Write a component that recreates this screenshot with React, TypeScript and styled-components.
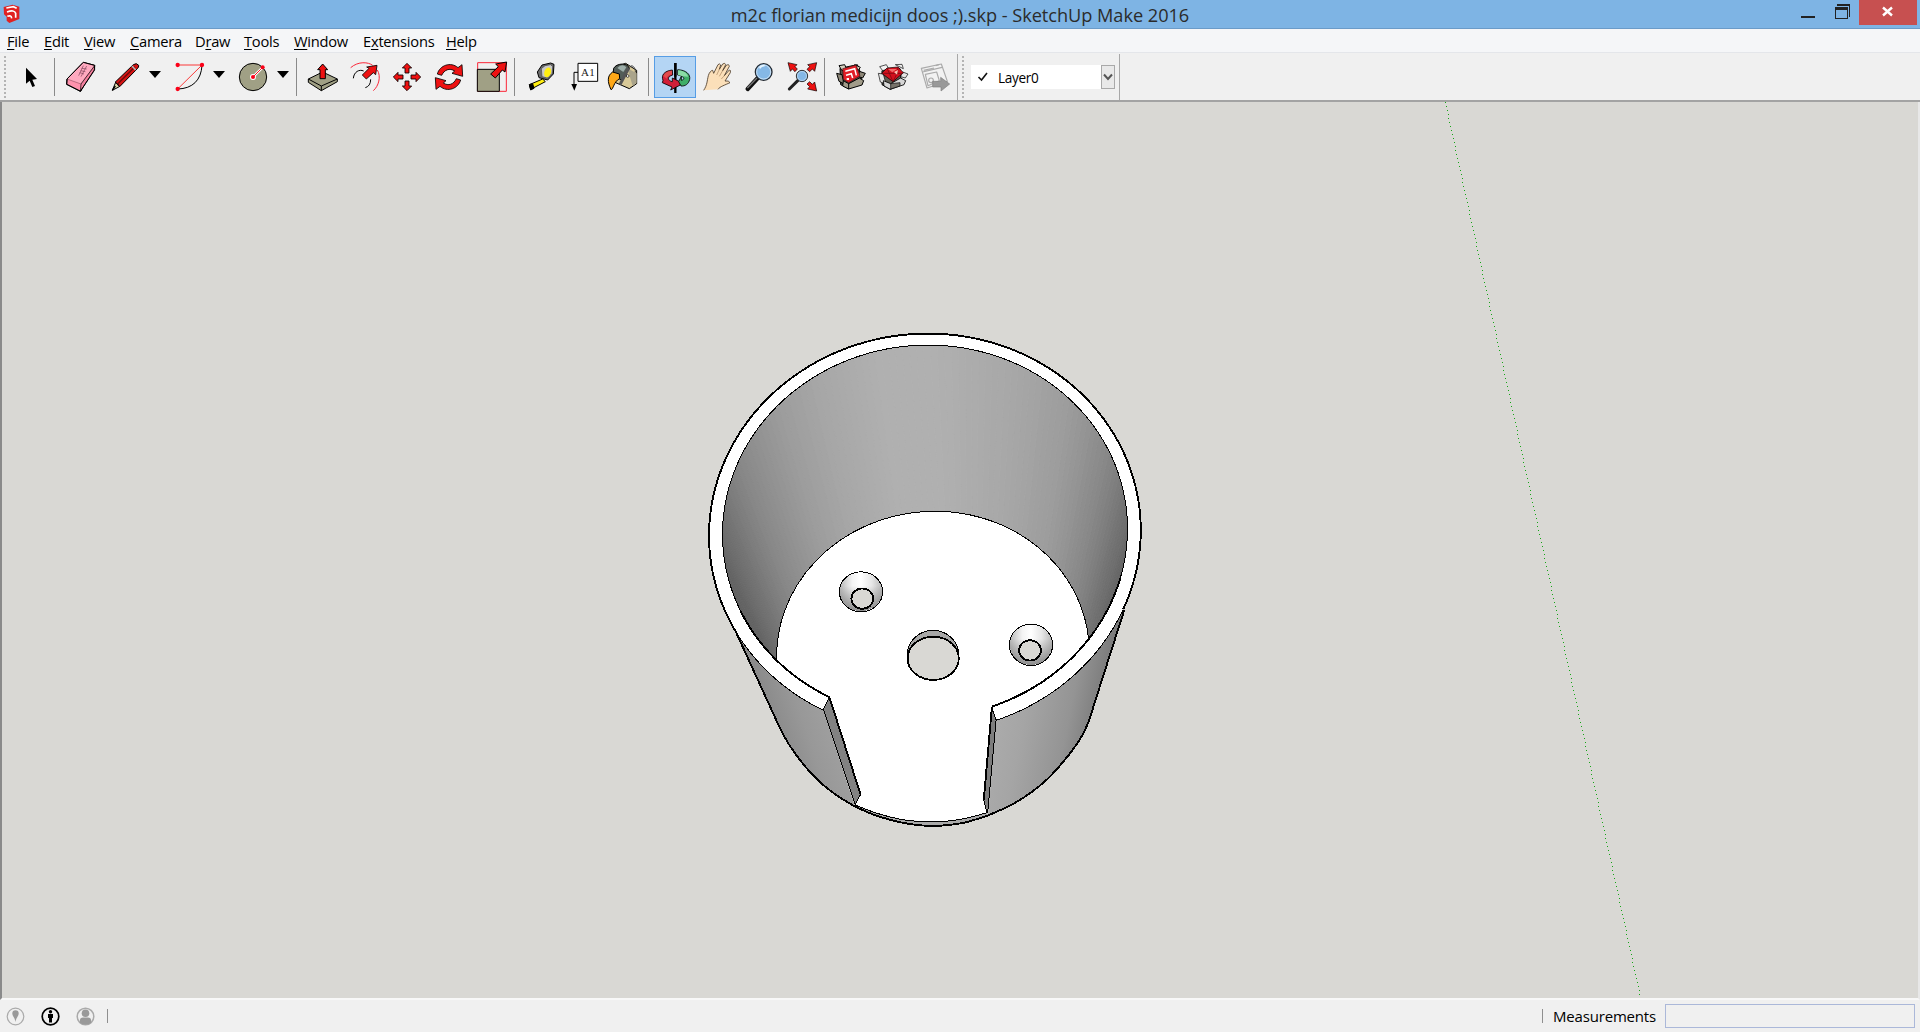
import React from "react";
import styled, { createGlobalStyle } from "styled-components";

const Global = createGlobalStyle`
  * { box-sizing: border-box; }
  html, body { margin: 0; padding: 0; overflow: hidden; }
  body { font-family: "Open Sans", "Noto Sans", sans-serif; color: #000; }
`;

const AppWindow = styled.div`
  width: 1920px;
  height: 1032px;
  display: flex;
  flex-direction: column;
  background: #f0f0f0;
`;

const TitleBar = styled.header`
  height: 29px;
  flex: none;
  display: grid;
  grid-template-columns: 160px 1fr 160px;
  background: #7eb4e4;
  border-bottom: 1px solid #6b9bc8;
`;

const AppIcon = styled.svg`
  width: 18px;
  height: 20px;
  margin: 4px 0 0 3px;
`;

const Title = styled.div`
  text-align: center;
  font-size: 18.2px;
  line-height: 30px;
  letter-spacing: -0.04px;
  color: #2b2b2b;
  white-space: pre;
`;

const WindowButtons = styled.div`
  display: flex;
  justify-content: flex-end;
  padding-right: 3px;
`;

const WindowButton = styled.button<{ $w: number; $close?: boolean }>`
  width: ${(p) => p.$w}px;
  height: 25px;
  border: 0;
  padding: 0;
  background: ${(p) => (p.$close ? "#c75050" : "transparent")};
  svg { display: block; }
`;

const MenuBar = styled.nav`
  height: 24px;
  flex: none;
  display: flex;
  padding-left: 7px;
  background: #f5f6f8;
  border-bottom: 1px solid #e4e6ea;
`;

const MenuItem = styled.div<{ $w: number }>`
  width: ${(p) => p.$w}px;
  flex: none;
  font-size: 14.7px;
  line-height: 25px;
  letter-spacing: -0.25px;
  white-space: nowrap;
  u { text-underline-offset: 2px; text-decoration-thickness: 1px; text-decoration-skip-ink: none; }
`;

const ToolArea = styled.div`
  height: 49px;
  flex: none;
  display: flex;
  background: #f0f0f0;
  border-bottom: 2px solid #a3a3a3;
  padding-top: 1px;
`;

const ToolBand = styled.div<{ $w: number }>`
  width: ${(p) => p.$w}px;
  height: 46px;
  flex: none;
  display: flex;
  align-items: center;
  border-right: 1px solid #a8a8a8;
`;

const Grip = styled.div<{ $l: number; $r: number }>`
  width: 2px;
  height: 42px;
  flex: none;
  margin: 0 ${(p) => p.$r}px 0 ${(p) => p.$l}px;
  background: repeating-linear-gradient(#b4b4b4 0 2px, transparent 2px 4px);
`;

const Separator = styled.div<{ $l?: number; $r?: number }>`
  width: 1px;
  height: 38px;
  flex: none;
  background: #8a8a8a;
  margin: 0 ${(p) => p.$r ?? 5}px 0 ${(p) => p.$l ?? 2}px;
`;

const ToolButton = styled.button<{ $active?: boolean; $gap?: number }>`
  width: 42px;
  height: 42px;
  flex: none;
  padding: 0;
  border: 0;
  margin-right: ${(p) => p.$gap ?? 0}px;
  background: ${(p) => (p.$active ? "#b4d5f4" : "transparent")};
  box-shadow: ${(p) => (p.$active ? "inset 0 0 0 1px #569de5" : "none")};
  svg { display: block; width: 42px; height: 42px; }
`;

const DropArrow = styled.button`
  width: 18px;
  height: 42px;
  flex: none;
  padding: 0 0 5px;
  border: 0;
  margin-right: 4px;
  background: transparent;
  display: flex;
  align-items: center;
  justify-content: center;
  &::before {
    content: "";
    border: 6px solid transparent;
    border-top: 7px solid #000;
    border-bottom: 0;
  }
`;

const LayerSelect = styled.div`
  width: 144px;
  height: 24px;
  display: flex;
  align-items: center;
  background: #fff;
  font-size: 13.6px;
  letter-spacing: -0.35px;
`;

const CheckMark = styled.svg`
  width: 12px;
  height: 10px;
  margin: 0 9px 0 6px;
`;

const SelectArrow = styled.div`
  width: 14px;
  height: 24px;
  margin-left: auto;
  border: 1px solid #a9a9a9;
  background: #e9e9e9;
  svg { display: block; }
`;

const Viewport = styled.main`
  height: 898px;
  flex: none;
  border: solid;
  border-width: 0 2px 2px 2px;
  border-color: #696969 #e8e8e8 #f8f8f8 #8a8a8a;
  background: #d9d8d4;
  svg { display: block; }
`;

const StatusBar = styled.footer`
  flex: 1;
  display: flex;
  align-items: center;
  justify-content: space-between;
  padding: 0 5px 0 6px;
`;

const StatusGroup = styled.div`
  display: flex;
  align-items: center;
`;

const StatusIcon = styled.svg`
  width: 19px;
  height: 19px;
  margin: 1px 16px 0 0;
`;

const StatusDivider = styled.div<{ $l?: number; $r?: number }>`
  width: 1px;
  height: 14px;
  background: #8f8f8f;
  margin: 0 ${(p) => p.$r ?? 0}px 0 ${(p) => p.$l ?? 0}px;
`;

const MeasureLabel = styled.span`
  width: 112px;
  font-size: 15px;
  line-height: 20px;
  letter-spacing: -0.18px;
`;

const MeasureBox = styled.div`
  width: 250px;
  height: 24px;
  border: 1px solid #abb8d9;
`;

type Pt = [number, number];

/* Smooth curve through a list of points. */
function curve(pts: Pt[]): string {
  let d = "";
  for (let i = 0; i < pts.length - 1; i++) {
    const p0 = pts[Math.max(0, i - 1)];
    const p1 = pts[i];
    const p2 = pts[i + 1];
    const p3 = pts[Math.min(pts.length - 1, i + 2)];
    d += `C${p1[0] + (p2[0] - p0[0]) / 6} ${p1[1] + (p2[1] - p0[1]) / 6} ${p2[0] - (p3[0] - p1[0]) / 6} ${p2[1] - (p3[1] - p1[1]) / 6} ${p2[0]} ${p2[1]}`;
  }
  return d;
}

interface Ell { cx: number; cy: number; a: number; b: number; rot: number }
const OUTER: Ell = { cx: 924.9, cy: 533, a: 216, b: 199.3, rot: -5 };
const INNER: Ell = { cx: 925, cy: 531.5, a: 202.6, b: 186.3, rot: -5 };
const FLOOR: Ell = { cx: 933, cy: 654.3, a: 156.4, b: 143, rot: -4 };

function at(e: Ell, deg: number): Pt {
  const t = (deg * Math.PI) / 180;
  const r = (e.rot * Math.PI) / 180;
  const u = e.a * Math.cos(t);
  const v = -e.b * Math.sin(t);
  return [e.cx + u * Math.cos(r) - v * Math.sin(r), e.cy + u * Math.sin(r) + v * Math.cos(r)];
}

/* Points of an elliptical arc, joined by line commands. */
function arc(e: Ell, from: number, to: number): string {
  const n = Math.ceil(Math.abs(to - from) / 1.5);
  return Array.from({ length: n + 1 }, (_, i) => `L${at(e, from + ((to - from) * i) / n).join(" ")}`).join("");
}

/* Grey level of the inner wall by angle around the axis. */
const SHADES: Pt[] = [
  [-60, 95], [-22, 97], [-8, 105], [6, 118], [20, 136], [40, 157], [60, 168], [82, 176], [98, 176],
  [115, 168], [132, 155], [150, 137], [168, 115], [182, 101], [195, 97], [215, 104], [240, 110],
];
function shade(deg: number): string {
  let i = 0;
  while (i < SHADES.length - 2 && SHADES[i + 1][0] < deg) i++;
  const [a, x] = SHADES[i];
  const [b, y] = SHADES[i + 1];
  const g = Math.round(x + ((y - x) * (deg - a)) / (b - a));
  return `rgb(${g},${g},${g})`;
}

function Ellipse({ e, ...rest }: { e: Ell } & React.SVGProps<SVGEllipseElement>) {
  return <ellipse cx={e.cx} cy={e.cy} rx={e.a} ry={e.b} transform={`rotate(${e.rot} ${e.cx} ${e.cy})`} {...rest} />;
}

function Model() {
  const strips = [];
  for (let d = -46; d < 232; d += 2) {
    const p = [at(INNER, d), at(INNER, d + 2), at(FLOOR, d + 2), at(FLOOR, d)];
    strips.push(<polygon key={d} points={p.map((q) => q.join(",")).join(" ")} fill={shade(d)} stroke={shade(d)} strokeWidth="1" />);
  }
  const dots = Array.from({ length: 224 }, (_, i) => (
    <rect key={i} x={Math.round(1445 + i * 0.872)} y={102 + i * 4} width="1" height="1" />
  ));
  const left: Pt[] = [[780, 728.3], [789, 744.5], [800, 760], [811, 773], [823.3, 785], [838, 796.3], [855, 806.5]];
  const front: Pt[] = [[855, 806.5], [872, 814], [890, 819.8], [905, 823.2], [920, 825.3], [932, 825.8], [944, 825.4], [965, 822.5], [988, 815.5]];
  const right: Pt[] = [[988, 815.5], [1010, 805.5], [1030, 793.3], [1048, 778.5], [1063.3, 761.7], [1074, 748], [1083.3, 733.3], [1090, 718], [1093.6, 706]];
  const floorFront: Pt[] = [[855, 805], [878, 813.6], [902, 819.6], [923, 821.6], [944, 821.4], [965, 818.5], [987, 812.7]];
  return (
    <svg width="1916" height="896" viewBox="2 102 1916 896">
      <defs>
        <linearGradient id="wallL" gradientUnits="userSpaceOnUse" x1="752" y1="690" x2="855" y2="655">
          <stop offset="0" stopColor="#868686" /><stop offset=".35" stopColor="#989898" /><stop offset="1" stopColor="#ababab" />
        </linearGradient>
        <linearGradient id="wallR" gradientUnits="userSpaceOnUse" x1="990" y1="700" x2="1112" y2="724">
          <stop offset="0" stopColor="#adadad" /><stop offset=".3" stopColor="#a5a5a5" /><stop offset=".65" stopColor="#949494" /><stop offset="1" stopColor="#6f6f6f" />
        </linearGradient>
        <linearGradient id="sinkX">
          <stop offset="0" stopColor="#b5b5b5" /><stop offset=".3" stopColor="#f3f3f3" /><stop offset=".5" stopColor="#fff" /><stop offset=".75" stopColor="#e6e6e6" /><stop offset="1" stopColor="#b5b5b5" />
        </linearGradient>
        <linearGradient id="sinkY" x1="0" y1="0" x2="0" y2="1">
          <stop offset=".35" stopColor="#777" stopOpacity="0" /><stop offset="1" stopColor="#777" stopOpacity=".85" />
        </linearGradient>
        <clipPath id="innerClip"><Ellipse e={INNER} /></clipPath>
      </defs>

      <g fill="#16a516" shapeRendering="crispEdges">{dots}</g>

      {/* rim */}
      <Ellipse e={OUTER} fill="#fff" />

      {/* outer wall, either side of the opening */}
      <path d={`M735 630L780 728.3${curve(left)}L823.5 709.7${arc(OUTER, 237.3, 203.7)}Z`} fill="url(#wallL)" />
      <path d={`M988 815.5${curve(right)}L1124.3 610${arc(OUTER, -28, -75.4)}Z`} fill="url(#wallR)" />

      {/* inner wall and floor */}
      <g clipPath="url(#innerClip)">
        {strips}
        <Ellipse e={FLOOR} fill="#fff" stroke="#000" strokeWidth="1" shapeRendering="crispEdges" />
      </g>
      <path d={`M829.3 697.3L860.3 794.3L855 805${curve(floorFront)}L983.7 800L991.7 708L960 690H860Z`} fill="#fff" />

      {/* base thickness in front of the opening */}
      <path d={`M855 806.5${curve(front)}L987 812.7L965 818.5L944 821.4L923 821.6L902 819.6L878 813.6L855 805Z`} fill="#a9a9a9" />

      {/* cut faces */}
      <path d="M829.5 697.5L823.5 709.7L855.3 804L860.5 794.5Z" fill="#828282" />
      <path d="M991.8 708.3L996 721L987.7 812.7L983.8 800Z" fill="#7d7d7d" />

      <g fill="none" stroke="#000" shapeRendering="crispEdges" strokeWidth="1">
        <path d={`M829.5 697.5${arc(INNER, 237, -75.2)}`} />
        <path d={`M735 630${arc(OUTER, 204, 237.2)}L829.5 697.5M823.5 709.7L855.3 804.5L860.5 794.5`} />
        <path d={`M1124.3 610${arc(OUTER, -28.2, -75.3)}L991.8 708.3M996 721L987.7 812.7`} />
        <path d={`M855 805${curve(floorFront)}L983.8 800`} />
      </g>
      <g fill="none" stroke="#000" shapeRendering="crispEdges" strokeWidth="1.9">
        <path d={`M735 630L780 728.3${curve(left)}${curve(front)}${curve(right)}L1124.3 610`} />
        <path d={`M735 630${arc(OUTER, 203.5, -27.8)}`} />
        <path d={`M${at(INNER, 200).join(" ")}${arc(INNER, 201, 236.8)}L829.5 697.5L860.5 794.5`} />
        <path d={`M${at(INNER, -20).join(" ")}${arc(INNER, -21, -75)}L991.8 708.3L983.8 800`} />
      </g>

      {/* screw holes */}
      {[[861, 591.8, 862.3, 598.6, 20], [1031, 644.8, 1030, 650.4, 20.7]].map(([x, y, ix, iy, ry]) => (
        <g key={x} stroke="#000" shapeRendering="crispEdges">
          <ellipse cx={x} cy={y} rx="21.6" ry={ry} fill="url(#sinkX)" strokeWidth="1" />
          <ellipse cx={x} cy={y} rx="21" ry={ry - 0.6} fill="url(#sinkY)" stroke="none" />
          <ellipse cx={ix} cy={iy} rx="10.9" ry="10.2" fill="#d9d8d4" strokeWidth="1.8" />
        </g>
      ))}
      <g stroke="#000" shapeRendering="crispEdges">
        <ellipse cx="933" cy="654.6" rx="25.6" ry="24.2" fill="#a8a8a8" strokeWidth="1" />
        <ellipse cx="933.2" cy="658.3" rx="25.6" ry="21.6" fill="#d9d8d4" strokeWidth="1.8" />
      </g>
    </svg>
  );
}

/* Icons are drawn on a 126-unit grid, three units to the pixel. */
function Icon({ x, y = 168, children }: { x: number; y?: number; children: React.ReactNode }) {
  return (
    <svg viewBox={`${x} ${y} 126 126`} fill="none" stroke="#000" strokeWidth="3" strokeLinejoin="round">
      {children}
    </svg>
  );
}

const RED = "#ee1111";

interface ToolProps { x: number; y?: number; active?: boolean; gap?: number; children: React.ReactNode }

function Tool({ x, y, active, gap, children }: ToolProps) {
  return <ToolButton $active={active} $gap={gap}><Icon x={x} y={y}>{children}</Icon></ToolButton>;
}

const MENUS: [string, string, string, number][] = [
  ["", "F", "ile", 37], ["", "E", "dit", 40], ["", "V", "iew", 46], ["", "C", "amera", 65], ["D", "r", "aw", 49],
  ["", "T", "ools", 50], ["", "W", "indow", 69], ["E", "x", "tensions", 83], ["", "H", "elp", 50],
];

export default function App() {
  return (
    <AppWindow>
      <Global />
      <TitleBar>
        <AppIcon viewBox="9 12 54 60">
          <path d="M11 21L38 14L58 20V57L28 69L20 62V50L12 43Z" fill="#e02222" />
          <path d="M19 24L40 20L50 25M21 36Q43 28 47 40V53M22 49Q34 44 35 55" fill="none" stroke="#fff" strokeWidth="5" />
        </AppIcon>
        <Title>m2c florian medicijn doos ;).skp - SketchUp Make 2016</Title>
        <WindowButtons>
          <WindowButton $w={34}>
            <svg width="34" height="25"><path d="M2 16h14v2H2z" fill="#222" /></svg>
          </WindowButton>
          <WindowButton $w={26}>
            <svg width="26" height="25" fill="none" stroke="#222" shapeRendering="crispEdges"><path d="M4 5h13M16.500 4v13" strokeWidth="1.900" /><path d="M2.500 8v10.500h12V8" /><path d="M2 8.500h13" strokeWidth="3" /></svg>
          </WindowButton>
          <WindowButton $w={58} $close>
            <svg width="58" height="25"><path d="M24 7.500l9 8M33 7.500l-9 8" stroke="#fff" strokeWidth="2.400" /></svg>
          </WindowButton>
        </WindowButtons>
      </TitleBar>
      <MenuBar>
        {MENUS.map(([a, k, b, w]) => <MenuItem key={k + b} $w={w}>{a}<u>{k}</u>{b}</MenuItem>)}
      </MenuBar>
      <ToolArea>
        <ToolBand $w={958}>
          <Grip $l={4} $r={4} />
          <Tool x={30}><path d="M78 203V251L89 242L97 261L105 258L97 239L111 237Z" fill="#000" stroke="none" /></Tool>
          <Separator />
          <Tool x={180} gap={2}>
            <path d="M250 187L284 196L242 274L200 253L201 237Z" fill="#ff92ad" />
            <path d="M201 237L243 252L284 197L250 187Z" fill="#ffa9bf" stroke="#7d3a4a" strokeWidth="1.500" />
            <path d="M243 252L241 274L284 210V197Z" fill="#f5819f" strokeWidth="2" />
            <path d="M250 187L284 196L283 210L241 274L200 253L201 237Z" />
            <path d="M250 197l-14 30m24-29l-17 32M245 205l15 2m-18 5l14 3m-17 3l13 4" stroke="#7c4257" strokeWidth="2" />
          </Tool>
          <Tool x={312}>
            <path d="M337 271L347 247L358 260Z" fill="#d9d6a9" />
            <path d="M345 247L400 194Q410 187 416 196Q417 201 412 206L359 260Q354 249 345 247Z" fill="#d51414" />
            <path d="M352 253L405 200" stroke="#6b0909" strokeWidth="4" />
            <path d="M396 198L407 210" stroke="#b6b6b6" strokeWidth="5" /><path d="M337 271L346 258" strokeWidth="4" />
          </Tool>
          <DropArrow />
          <Tool x={504}>
            <path d="M606 195C604 240 578 266 533 267" />
            <path d="M533 195H606L533 267" stroke="#fb3838" />
            <g fill="#fb0018" stroke="none"><circle cx="533" cy="195" r="6.500" /><circle cx="606" cy="195" r="6.500" /><circle cx="533" cy="267" r="6.500" /></g>
          </Tool>
          <DropArrow />
          <Tool x={696}>
            <circle cx="759" cy="231" r="41" fill="#a0a085" />
            <circle cx="759" cy="231" r="9" fill="#fff" stroke="none" /><path d="M759 231L788 202" stroke="#fff" strokeWidth="7" />
            <path d="M759 231L788 202" stroke="#f12" /><g fill="#fb0018" stroke="none"><circle cx="759" cy="231" r="6" /><circle cx="788" cy="202" r="6" /></g>
          </Tool>
          <DropArrow />
          <Separator $l={0} />
          <Tool x={36}>
            <path d="M55 237L98 216L142 237V245L94 272L55 247Z" fill="#a0a085" /><path d="M55 237L94 258L142 237M94 258V272" />
            <path d="M98 192L113 209H106V236H90V209H83Z" fill={RED} />
          </Tool>
          <Tool x={162}>
            <path d="M182 203C205 183 235 186 248 196M262 210C274 230 266 258 250 272" stroke="#fb2638" />
            <path d="M190 235C192 215 208 207 221 213M242 238C242 252 236 260 226 263" />
            <path d="M261 196L257 224L250 218L229 237L217 225L237 205L230 201Z" fill={RED} strokeWidth="2.500" />
          </Tool>
          <Tool x={288}>
            {[0, 90, 180, 270].map((r) => <path key={r} transform={`rotate(${r} 351 231)`} d="M351 190L365 204H357V219H345V204H337Z" fill={RED} strokeWidth="2.500" />)}
          </Tool>
          <Tool x={414}>
            {[0, 180].map((r) => <path key={r} transform={`rotate(${r} 477 231)`} d="M442 222C449 196 482 184 504 203L516 194L518 229L486 220L494 213C479 203 463 209 455 226Z" fill={RED} strokeWidth="2.500" />)}
          </Tool>
          <Tool x={540}>
            <path d="M563 188H649V274H563Z" stroke="#fb2638" /><path d="M562 208H628V274H562Z" fill="#a0a085" />
            <path d="M650 186L645 216L637 210L616 234L602 222L625 200L617 192Z" fill={RED} />
          </Tool>
          <Separator $l={2} $r={3} />
          <Tool x={-6} y={18}>
            <path d="M28 104L32 118L76 95L68 87Z" fill="#ffee10" /><path d="M28 104L32 120L42 115L38 101Z" fill="#000" />
            <path d="M52 66L66 45L92 39L102 43L100 72L83 90L57 83Z" fill="#6b6b6b" />
            <path d="M64 56L75 47L92 44L98 50L96 70L82 84L66 80Z" fill="#c9c9c9" stroke="#444" strokeWidth="2" /><ellipse cx="83" cy="67" rx="10" ry="15" transform="rotate(18 83 67)" fill="#ffee10" stroke="none" />
          </Tool>
          <Tool x={120} y={18}>
            <path d="M174 40H233V94H174Z" fill="#fff" /><path d="M174 67H162V104" /><path d="M154 102H171L163 122Z" fill="#000" stroke="none" />
            <text x="183" y="77" fontFamily="Liberation Serif, serif" fontSize="33" textLength="41" fill="#222" stroke="none">A1</text>
          </Tool>
          <Tool x={246} y={18}>
            <path d="M288 50L317 40L350 61V101L328 116L287 98Z" fill="#d8c998" />
            <path d="M322 55L350 70V98L338 108Z" fill="#aaa48b" stroke="none" />
            <path d="M281 55C291 37 326 40 326 53C323 67 313 82 303 90L279 73Z" fill="#535d58" />
            <path d="M292 54Q306 39 319 52L310 66Z" fill="#9daea9" stroke="none" />
            <path d="M326 54L300 104" stroke="#555" strokeWidth="9" />
            <path d="M298 72L278 66C261 77 262 95 273 119C280 119 281 94 299 86Z" fill="#ffa817" />
            <path d="M328 58C329 39 348 48 346 67" stroke="#444" /><circle cx="323" cy="78" r="4" fill="#fff" strokeWidth="2" />
          </Tool>
          <Separator $l={4} />
          <Tool x={402} y={18} active>
            <path d="M466 39V129" strokeWidth="7" />
            <path d="M457 60C432 63 423 76 429 91L427 98L456 111L452 120L481 105V96L457 84V95C443 92 440 80 458 75Z" fill="#d01f38" strokeWidth="2.500" />
            <path d="M473 59C498 60 512 73 509 88C506 102 496 109 483 108L476 95L484 79V91C498 88 491 78 473 75Z" fill="#3fae68" strokeWidth="2.500" />
            <path d="M474 61C493 62 503 72 504 80L489 79L474 75Z" fill="#8bdba6" stroke="none" /><path d="M430 78Q434 64 456 62V73Q441 77 440 86Z" fill="#e04c4c" stroke="none" />
            <path d="M466 39V80" strokeWidth="7" />
          </Tool>
          <Tool x={528} y={18}>
            <path d="M551 121C562 105 561 92 565 77C567 69 573 61 578 61L581 70L594 44Q599 39 602 45L598 58L608 42Q615 37 617 44L608 62L619 46Q627 41 628 49L613 77L628 60Q633 59 631 68L615 93Q627 91 630 98C615 105 599 110 594 118" fill="#fbdfb9" stroke="#4a3a28" strokeWidth="2.500" />
            <path d="M598 58L590 75M608 62L598 79M613 77L604 87" stroke="#a8845e" strokeWidth="2" />
          </Tool>
          <Tool x={654} y={18}>
            <path d="M714 83L683 117" strokeWidth="13" strokeLinecap="round" stroke="#111" /><path d="M711 84L682 114" strokeWidth="4" stroke="#777" />
            <circle cx="731" cy="66" r="25" fill="#85b8e6" stroke="#252a31" strokeWidth="4" /><circle cx="731" cy="66" r="21" stroke="#c7dff3" /><path d="M719 55q5-9 15-8" stroke="#e6f5ff" strokeWidth="5" />
          </Tool>
          <Tool x={780} y={18}>
            <path d="M834 91L808 117" strokeWidth="9" strokeLinecap="round" stroke="#222" /><circle cx="846" cy="78" r="17" fill="#85b8e6" stroke="#333" /><circle cx="846" cy="78" r="13.500" stroke="#c7dff3" strokeWidth="2" />
            <path d="M804 38L831 44L825 50L832 57L825 65L817 57L811 64Z M890 38L863 44L869 50L861 58L869 65L877 57L884 64Z M890 123L863 117L869 110L861 102L869 95L877 103L884 96Z" fill={RED} strokeWidth="2" />
          </Tool>
          <Separator $l={2} />
          <Tool x={30} y={18}>
            <path d="M60 55L112 44L126 80L118 100L86 116L62 104Z" fill="#57534b" />
            <path d="M57 47L74 44L80 58L66 62Z M104 44L121 52L114 62Z" fill="#d5d0bf" />
            <path d="M50 70L66 74L72 102L57 94Z M118 64L136 70L128 84L116 80Z" fill="#8d8778" />
            <path d="M68 56L108 45L120 78L86 98L70 88Z" fill="#e11d26" stroke="#3b1515" strokeWidth="2" />
            <path d="M76 64L104 56L109 76M78 76L94 71L98 84" stroke="#fff" strokeWidth="4.500" strokeLinejoin="miter" /><path d="M80 84h7v6h-7z" fill="#fff" stroke="none" />
            <path d="M70 92L86 101L118 84L131 92L126 105L86 117L68 108Z" fill="#a19c8a" /><path d="M86 101V117" />
          </Tool>
          <Tool x={156} y={18}>
            <path d="M186 62L240 56L244 100L211 118L186 104Z" fill="#625f55" />
            <path d="M179 50L199 44L206 56L188 62Z M226 44L246 43L250 56Z" fill="#f2f2f2" strokeWidth="2" />
            <path d="M175 70L190 72L198 102L181 96Z M248 66L264 72L256 84L242 80Z" fill="#e6e6e6" strokeWidth="2" />
            <path d="M185 70L201 54L234 51L250 68L219 95Z" fill="#d3101d" strokeWidth="2" />
            <path d="M185 70H250M201 54L208 70L219 95L232 69L234 51" stroke="#680810" strokeWidth="2" />
            <path d="M204 57h27l-14 10z" fill="#f46a6a" stroke="none" /><path d="M222 66l12-6-3 14z" fill="#ffc0b0" stroke="none" />
            <path d="M190 92L212 101L242 84L257 92L252 104L211 118L192 108Z" fill="#d6d6d6" strokeWidth="2.500" /><path d="M212 101V117L240 108V98Z" fill="#77736a" strokeWidth="2" />
          </Tool>
          <Tool x={282} y={18}>
            <g stroke="#aaa" strokeWidth="3.500"><path d="M304 55L364 42L382 94L321 114Z" fill="#f2f2f2" /><path d="M308 66L366 52M311 61L342 54M347 47l10-3M316 73L350 66L358 92L324 107Z" /><circle cx="333" cy="91" r="7" /></g>
            <path d="M338 94H362V82L389 102L363 123V111H338Z" fill="#999" stroke="#818181" strokeWidth="2" />
          </Tool>
        </ToolBand>
        <ToolBand $w={162}>
          <Grip $l={4} $r={7} />
          <LayerSelect>
            <CheckMark viewBox="0 0 12 10"><path d="M1.500 5l3 3 5.500-7" fill="none" stroke="#111" strokeWidth="1.600" /></CheckMark>
            Layer0
            <SelectArrow><svg width="12" height="22"><path d="M2 8.500l4 4.500 4-4.500" fill="none" stroke="#555" strokeWidth="2" /></svg></SelectArrow>
          </LayerSelect>
        </ToolBand>
      </ToolArea>
      <Viewport><Model /></Viewport>
      <StatusBar>
        <StatusGroup>
          <StatusIcon viewBox="0 0 19 19"><circle cx="9.500" cy="9.500" r="8.300" fill="none" stroke="#aaa" strokeWidth="1.200" /><path d="M9.500 15C9 11 6.300 9 6.300 6.500a3.200 3.200 0 0 1 6.400 0C12.700 9 10 11 9.500 15z" fill="#999" /></StatusIcon>
          <StatusIcon viewBox="0 0 19 19"><circle cx="9.500" cy="9.500" r="8.300" fill="none" stroke="#000" strokeWidth="1.700" /><circle cx="9.500" cy="4.800" r="1.700" /><path d="M7 7h5v4h-1v4.500H8V11H7z" /></StatusIcon>
          <StatusIcon viewBox="0 0 19 19"><circle cx="9.500" cy="9.500" r="8.300" fill="none" stroke="#aaa" strokeWidth="1.500" /><circle cx="9.500" cy="6.300" r="3.800" fill="#999" /><path d="M4 16v-3q0-2.500 3-2.500h5q3 0 3 2.500v3q-5.500 3-11 0z" fill="#999" /></StatusIcon>
          <StatusDivider $l={-4} />
        </StatusGroup>
        <StatusGroup>
          <StatusDivider $r={10} />
          <MeasureLabel>Measurements</MeasureLabel>
          <MeasureBox />
        </StatusGroup>
      </StatusBar>
    </AppWindow>
  );
}
